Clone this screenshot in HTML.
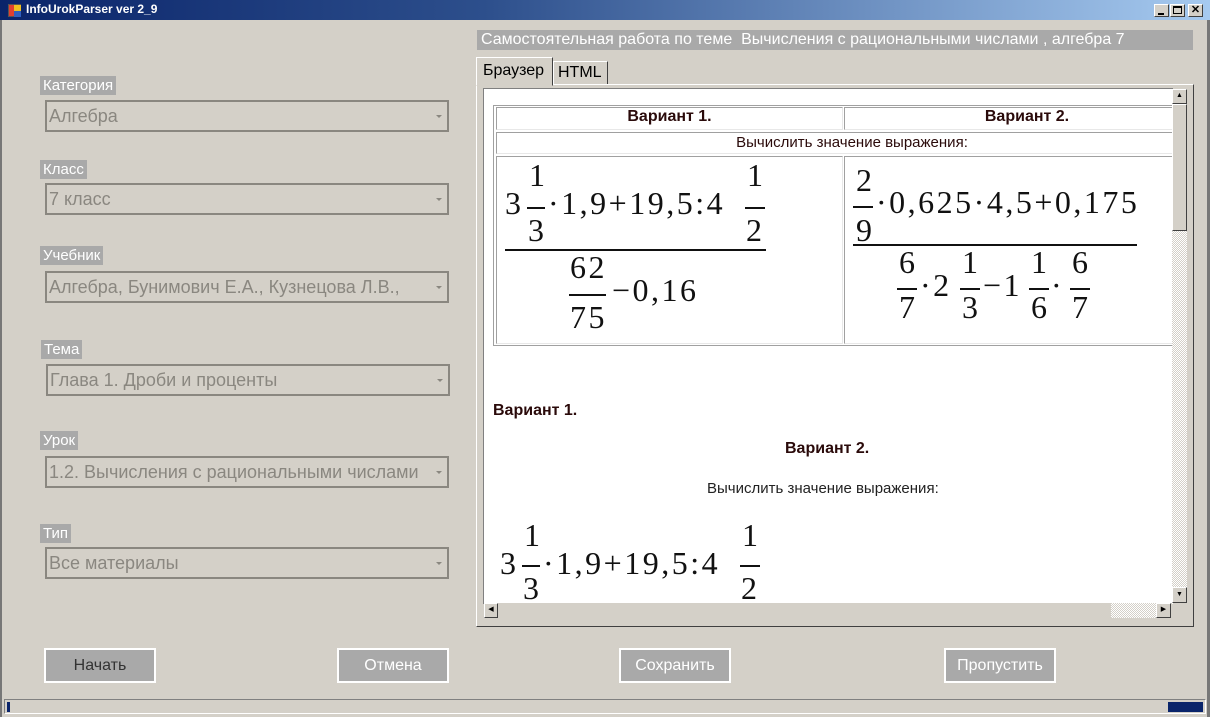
<!DOCTYPE html>
<html><head><meta charset="utf-8"><style>
*{margin:0;padding:0;box-sizing:border-box}
body{width:1210px;height:717px;background:#d4d0c8;position:relative;overflow:hidden;font-family:"Liberation Sans",sans-serif}
.a{position:absolute}
.lbl{position:absolute;background:#a9a9a9;color:#fff;font-size:15px;line-height:19px;padding:0 3px}
.cb{position:absolute;left:45px;width:404px;height:32px;border:2px solid #8a8780;color:#8a8780;font-size:18px;line-height:28px;padding-left:2px;white-space:nowrap;overflow:hidden}
.cb:after{content:"";position:absolute;right:5px;top:13px;border-left:3px solid transparent;border-right:3px solid transparent;border-top:3px solid #8a8780}
.btn{position:absolute;top:648px;height:35px;background:#a9a9a9;border:2px solid #fff;color:#fff;font-size:16px;text-align:center;line-height:31px}
.m{position:absolute;font-family:"Liberation Serif",serif;font-size:32px;line-height:1;letter-spacing:2.5px;margin-top:-3px;color:#111;white-space:nowrap}
.bar{position:absolute;height:2px;background:#111}
.c{position:absolute;border:1px solid #a0a0a0;border-right-color:#e8e8e8;border-bottom-color:#e8e8e8}
.t{position:absolute;font-size:15px;color:#2a0a0a;white-space:nowrap}
.b{font-size:16px;font-weight:bold}
</style></head><body>
<div class="a" style="left:0;top:0;width:1210px;height:20px;background:linear-gradient(90deg,#0a246a 0%,#2d4f8c 40%,#a6caf0 100%)"></div>
<div class="a" style="left:8px;top:4px;width:13px;height:13px;background:#e04030;border:1px solid #555"><div class="a" style="left:5px;top:0;width:7px;height:6px;background:#f0c020"></div><div class="a" style="left:5px;top:6px;width:7px;height:6px;background:#3060c0"></div></div>
<div class="a" style="left:26px;top:2px;color:#fff;font-weight:bold;font-size:12px">InfoUrokParser ver 2_9</div>
<div class="a" style="left:1154px;top:4px;width:15px;height:13px;background:#d4d0c8;border:1px solid;border-color:#fff #404040 #404040 #fff"><div class="a" style="left:3px;top:8px;width:6px;height:2px;background:#000"></div></div>
<div class="a" style="left:1170px;top:4px;width:15px;height:13px;background:#d4d0c8;border:1px solid;border-color:#fff #404040 #404040 #fff"><div class="a" style="left:2px;top:1px;width:9px;height:8px;border:1px solid #000;border-top-width:2px"></div></div>
<div class="a" style="left:1188px;top:4px;width:15px;height:13px;background:#d4d0c8;border:1px solid;border-color:#fff #404040 #404040 #fff;font-size:11px;font-weight:bold;text-align:center;line-height:11px">✕</div>
<div class="a" style="left:0;top:20px;width:2px;height:697px;background:#777"></div>
<div class="a" style="left:1207px;top:20px;width:3px;height:697px;background:#777"></div>

<div class="lbl" style="left:40px;top:76px">Категория</div>
<div class="cb" style="top:100px">Алгебра</div>
<div class="lbl" style="left:40px;top:160px">Класс</div>
<div class="cb" style="top:183px">7 класс</div>
<div class="lbl" style="left:40px;top:246px">Учебник</div>
<div class="cb" style="top:271px">Алгебра, Бунимович Е.А., Кузнецова Л.В.,</div>
<div class="lbl" style="left:41px;top:340px">Тема</div>
<div class="cb" style="top:364px;left:46px">Глава 1. Дроби и проценты</div>
<div class="lbl" style="left:40px;top:431px">Урок</div>
<div class="cb" style="top:456px">1.2. Вычисления с рациональными числами</div>
<div class="lbl" style="left:40px;top:524px">Тип</div>
<div class="cb" style="top:547px">Все материалы</div>

<div class="a" style="left:477px;top:30px;width:716px;height:20px;background:#a9a9a9;color:#fff;font-size:16px;line-height:20px;padding-left:4px;white-space:nowrap;overflow:hidden">Самостоятельная работа по теме&nbsp; Вычисления с рациональными числами , алгебра 7</div>

<div class="a" style="left:476px;top:57px;width:77px;height:29px;border:1px solid;border-color:#fff #404040 transparent #fff;background:#d4d0c8;font-size:16px;line-height:26px;padding-left:6px;z-index:2">Браузер</div>
<div class="a" style="left:553px;top:61px;width:55px;height:24px;border:1px solid;border-color:#fff #404040 transparent #fff;font-size:16px;line-height:22px;padding-left:4px">HTML</div>
<div class="a" style="left:476px;top:84px;width:718px;height:543px;border:1px solid;border-color:#fff #404040 #404040 #fff"></div>

<div class="a" style="left:483px;top:88px;width:690px;height:516px;border-left:1px solid #808080;border-top:1px solid #808080;background:#fff;overflow:hidden">
<div class="a" style="left:-484px;top:-89px;width:1210px;height:717px">
 <div class="a" style="left:493px;top:105px;width:690px;height:241px;border:1px solid #a0a0a0"></div>
 <div class="c" style="left:496px;top:107px;width:347px;height:23px"></div>
 <div class="c" style="left:844px;top:107px;width:340px;height:23px"></div>
 <div class="c" style="left:496px;top:132px;width:690px;height:22px"></div>
 <div class="c" style="left:496px;top:156px;width:347px;height:188px"></div>
 <div class="c" style="left:844px;top:156px;width:340px;height:188px"></div>
 <div class="t b" style="left:496px;width:347px;top:108px;text-align:center">Вариант 1.</div>
 <div class="t b" style="left:844px;width:366px;top:108px;text-align:center">Вариант 2.</div>
 <div class="t" style="left:496px;width:712px;top:134px;text-align:center">Вычислить значение выражения:</div>

 <div class="m" style="left:505px;top:190px">3</div>
 <div class="m" style="left:529px;top:162px">1</div><div class="bar" style="left:527px;top:207px;width:18px"></div><div class="m" style="left:528px;top:217px">3</div>
 <div class="m" style="left:548px;top:190px">·1,9+19,5:4</div>
 <div class="m" style="left:747px;top:162px">1</div><div class="bar" style="left:745px;top:207px;width:20px"></div><div class="m" style="left:746px;top:217px">2</div>
 <div class="bar" style="left:505px;top:249px;width:261px"></div>
 <div class="m" style="left:570px;top:254px">62</div><div class="bar" style="left:569px;top:294px;width:37px"></div><div class="m" style="left:570px;top:304px">75</div>
 <div class="m" style="left:612px;top:277px">−0,16</div>

 <div class="m" style="left:856px;top:167px">2</div><div class="bar" style="left:853px;top:206px;width:20px"></div><div class="m" style="left:856px;top:217px">9</div>
 <div class="m" style="left:876px;top:189px">·0,625·4,5+0,175</div>
 <div class="bar" style="left:853px;top:244px;width:284px"></div>
 <div class="m" style="left:899px;top:249px">6</div><div class="bar" style="left:897px;top:288px;width:20px"></div><div class="m" style="left:899px;top:294px">7</div>
 <div class="m" style="left:920px;top:272px">·2</div>
 <div class="m" style="left:962px;top:249px">1</div><div class="bar" style="left:960px;top:288px;width:20px"></div><div class="m" style="left:962px;top:294px">3</div>
 <div class="m" style="left:983px;top:272px">−1</div>
 <div class="m" style="left:1031px;top:249px">1</div><div class="bar" style="left:1029px;top:288px;width:20px"></div><div class="m" style="left:1031px;top:294px">6</div>
 <div class="m" style="left:1051px;top:272px">·</div>
 <div class="m" style="left:1072px;top:249px">6</div><div class="bar" style="left:1070px;top:288px;width:20px"></div><div class="m" style="left:1072px;top:294px">7</div>

 <div class="t b" style="left:493px;top:402px">Вариант 1.</div>
 <div class="t b" style="left:785px;top:440px">Вариант 2.</div>
 <div class="t" style="left:707px;top:480px;color:#222">Вычислить значение выражения:</div>

 <div class="m" style="left:500px;top:550px">3</div>
 <div class="m" style="left:524px;top:522px">1</div><div class="bar" style="left:522px;top:565px;width:18px"></div><div class="m" style="left:523px;top:575px">3</div>
 <div class="m" style="left:543px;top:550px">·1,9+19,5:4</div>
 <div class="m" style="left:742px;top:522px">1</div><div class="bar" style="left:740px;top:565px;width:20px"></div><div class="m" style="left:741px;top:575px">2</div>
</div>
</div>
<div class="a" style="left:1172px;top:89px;width:15px;height:514px;background:repeating-conic-gradient(#fff 0 25%,#d4d0c8 0 50%) 0 0/2px 2px"></div>
<div class="a" style="left:1172px;top:89px;width:15px;height:15px;background:#d4d0c8;border:1px solid;border-color:#fff #404040 #404040 #fff;font-size:7px;text-align:center;line-height:12px">▲</div>
<div class="a" style="left:1172px;top:104px;width:15px;height:127px;background:#d4d0c8;border:1px solid;border-color:#fff #404040 #404040 #fff"></div>
<div class="a" style="left:1172px;top:587px;width:15px;height:16px;background:#d4d0c8;border:1px solid;border-color:#fff #404040 #404040 #fff;font-size:7px;text-align:center;line-height:13px">▼</div>
<div class="a" style="left:484px;top:603px;width:688px;height:15px;background:#d4d0c8"></div>
<div class="a" style="left:1111px;top:603px;width:45px;height:15px;background:repeating-conic-gradient(#fff 0 25%,#d4d0c8 0 50%) 0 0/2px 2px"></div>
<div class="a" style="left:484px;top:603px;width:14px;height:15px;border:1px solid;border-color:#fff #404040 #404040 #fff;font-size:7px;line-height:12px;text-align:center">◀</div>
<div class="a" style="left:1156px;top:603px;width:15px;height:15px;border:1px solid;border-color:#fff #404040 #404040 #fff;font-size:7px;line-height:12px;text-align:center">▶</div>

<div class="btn" style="left:44px;width:112px;color:#333">Начать</div>
<div class="btn" style="left:337px;width:112px">Отмена</div>
<div class="btn" style="left:619px;width:112px">Сохранить</div>
<div class="btn" style="left:944px;width:112px">Пропустить</div>

<div class="a" style="left:4px;top:699px;width:1202px;height:15px;border:1px solid;border-color:#808080 #fff #fff #808080;background:#d4d0c8"></div>
<div class="a" style="left:7px;top:702px;width:3px;height:10px;background:#0a246a"></div>
<div class="a" style="left:1168px;top:702px;width:35px;height:10px;background:#0a246a"></div>
</body></html>
